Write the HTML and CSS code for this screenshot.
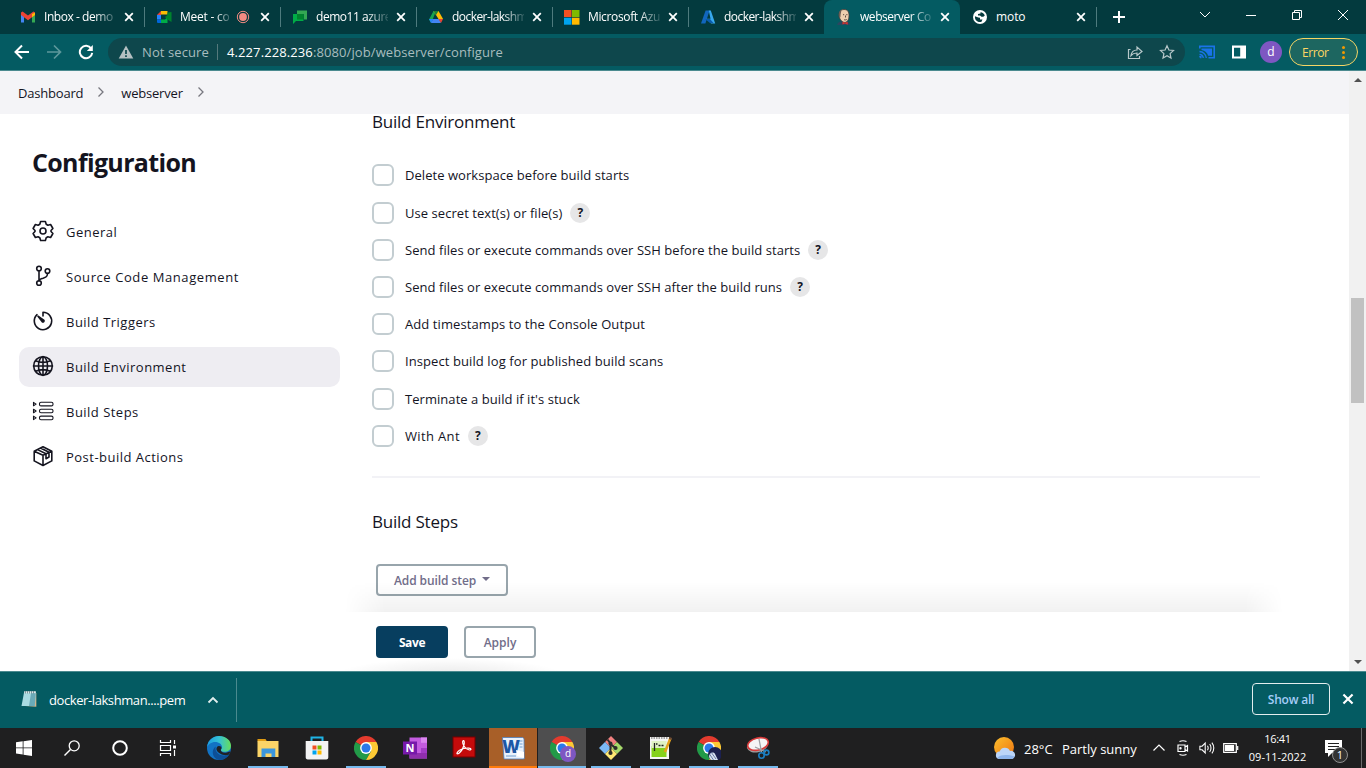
FILE: index.html
```html
<!DOCTYPE html>
<html lang="en">
<head>
<meta charset="utf-8">
<title>webserver Config [Jenkins]</title>
<link rel="stylesheet" href="styles.css">
</head>
<body>
<svg class="defs" aria-hidden="true">
  <symbol id="x" viewBox="0 0 10 10"><path d="M1.2 1.2l7.6 7.6M8.8 1.2L1.2 8.8" fill="none" stroke="currentColor" stroke-width="1.8"/></symbol>
  <symbol id="chrome" viewBox="0 0 24 24">
    <path d="M12 12L1.6 6A12 12 0 0 1 22.4 6z" fill="#e33b2e"/>
    <path d="M12 12L1.6 6A12 12 0 0 0 12 24L17.2 15z" fill="#229a48"/>
    <path d="M12 12L12 6H22.4A12 12 0 0 1 12 24L17.2 15z" fill="#fcc934"/>
    <circle cx="12" cy="12" r="5.9" fill="#fff"/><circle cx="12" cy="12" r="4.5" fill="#2a78ea"/>
  </symbol>
</svg>

<header class="tabs">
  <div class="tab">
    <svg class="fav" viewBox="0 0 16 16"><path d="M1 4v9.5h3V7z" fill="#4285f4"/><path d="M15 4v9.5h-3V7z" fill="#34a853"/><path d="M1 3.5L2.6 2.4 8 6.6l5.4-4.2L15 3.5V6l-7 5.2L1 6z" fill="#ea4335"/><path d="M12 5l3-1.500V6l-3 2.200z" fill="#fbbc04"/></svg>
    <span class="ttl t-a">Inbox - demo</span><svg class="cls"><use href="#x"/></svg>
  </div>
  <div class="tab">
    <svg class="fav" viewBox="0 0 16 16"><path d="M1 6l4-4v4z" fill="#ea4335"/><path d="M5 2h6.500v3.500H5z" fill="#fbbc04"/><path d="M1 6h4v4.500H1z" fill="#2684fc"/><path d="M1 10.500h4V14H2a1 1 0 0 1-1-1z" fill="#0066da"/><path d="M5 10.500h4L11.500 8v6H5z" fill="#00ac47"/><path d="M9 8l2.500-2V3.500L15.500 3v10l-4-2.500z" fill="#00832d"/></svg>
    <span class="ttl short t-b">Meet - co</span>
    <svg class="rec" viewBox="0 0 14 14"><circle cx="7" cy="7" r="5.700" fill="none" stroke="#f28b82" stroke-width="1"/><circle cx="7" cy="7" r="3.900" fill="#f28b82"/></svg><svg class="cls"><use href="#x"/></svg>
  </div>
  <div class="tab">
    <svg class="fav" viewBox="0 0 16 16"><path d="M5 1.500h10v9h-3V5H5z" fill="#34a853"/><path d="M1 5h10.500v7H4l-3 3z" fill="#00ac47"/><path d="M5 5h6.500v5.500H5z" fill="#00832d"/></svg>
    <span class="ttl t-c">demo11 azure</span><svg class="cls"><use href="#x"/></svg>
  </div>
  <div class="tab">
    <svg class="fav" viewBox="0 0 16 16"><path d="M5.500 2H8L3.300 14 1 10.500z" fill="#16a34f"/><path d="M5.500 2h5l4.600 8H10.500z" fill="#fbbc04"/><path d="M5.500 2h5L8 6z" fill="#188038"/><path d="M5 10h6l2 4H3z" fill="#4285f4"/><path d="M10.500 10H15l-2 4z" fill="#ea4335"/><path d="M1 10h4.500L3 14z" fill="#2684fc"/></svg>
    <span class="ttl t-d">docker-lakshm</span><svg class="cls"><use href="#x"/></svg>
  </div>
  <div class="tab">
    <svg class="fav" viewBox="0 0 16 16"><path d="M0 1h7.500v7H0z" fill="#f25022"/><path d="M8 1h7.500v7H8z" fill="#7fba00"/><path d="M0 8.700h7.500v7H0z" fill="#00a4ef"/><path d="M8 8.700h7.500v7H8z" fill="#ffb900"/></svg>
    <span class="ttl t-e">Microsoft Azu</span><svg class="cls"><use href="#x"/></svg>
  </div>
  <div class="tab last">
    <svg class="fav" viewBox="0 0 16 16"><path d="M5.600 1.500h4L5.400 14.500H1z" fill="#1266bd"/><path d="M8.800 1.500h2L15.200 14.500h-4.200L6.500 9.800h4z" fill="#38a8ee"/><path d="M5 10h5l3.500 4H10z" fill="#0a5cad"/></svg>
    <span class="ttl t-d">docker-lakshm</span><svg class="cls"><use href="#x"/></svg>
  </div>
  <div class="tab active">
    <svg class="fav" viewBox="0 0 16 16"><path d="M1.200 16c.2-2.400 2-3.400 4-3.600l6 .2c1.800.3 2.600 1.700 2.800 3.400z" fill="#2c4660"/><path d="M3 6C3 2.500 4.600.5 8 .5s5.200 2 5 6.300c0 3.800-1.800 6.600-4.300 6.600S3 10 3 6z" fill="#efcfae" stroke="#4a3a35" stroke-width=".8"/><path d="M2.900 7.500C2.300 4 3.500 1.800 5.500 1L4.600 5.500l-.2 3z" fill="#6d5d54"/><path d="M6.500 12.700l2.500 1 2.700-1v3L9 14.600l-2.500 1z" fill="#d8332d"/><path d="M7 5.700h1.200m2 0h1.300M9.500 6.500v2M8 10.600c1 .5 2 .4 2.800-.2" stroke="#3a2c28" stroke-width=".8" fill="none"/></svg>
    <span class="ttl t-f">webserver Co</span><svg class="cls"><use href="#x"/></svg>
  </div>
  <div class="tab">
    <svg class="fav" viewBox="0 0 16 16"><circle cx="8" cy="8" r="7" fill="#fff"/><path d="M8.500 3.300c2 .1 3.700 1.400 4.300 3.200l-1.500 1.300H9.500L8 6.500h-2V5l2.500-.4zM3 7.200l3.300 1.400 1.700.2v1.600l2.500.2-1.200 2.300A5 5 0 0 1 3 7.200z" fill="#053a3d"/></svg>
    <span class="ttl t-g">moto</span><svg class="cls"><use href="#x"/></svg>
  </div>
  <svg class="plus" viewBox="0 0 12 12"><path d="M6 0v12M0 6h12" stroke="#fff" stroke-width="2"/></svg>
  <div class="wincontrols">
    <svg viewBox="0 0 14 14"><path d="M2 4l5 5 5-5" /></svg>
    <svg viewBox="0 0 14 14"><path d="M2 7.500h10"/></svg>
    <svg viewBox="0 0 14 14"><path d="M2.500 4.500h7v7h-7zM4.500 4.500v-2h7v7h-2"/></svg>
    <svg viewBox="0 0 14 14"><path d="M2 2l10 10M12 2L2 12"/></svg>
  </div>
</header>

<nav class="toolbar">
  <div class="navbtns">
    <svg viewBox="0 0 16 16"><path d="M15 8H2M8 1.500L1.500 8 8 14.500" stroke="#fff" stroke-width="2" fill="none"/></svg>
    <svg viewBox="0 0 16 16"><path d="M1 8h13M8 1.500L14.500 8 8 14.500" stroke="#5e989c" stroke-width="1.700" fill="none"/></svg>
    <svg viewBox="0 0 16 16"><path d="M13.200 4.600A6.200 6.200 0 1 0 14.200 8.800" stroke="#fff" stroke-width="2" fill="none"/><path d="M14.800 1v6H8.800z" fill="#fff"/></svg>
  </div>
  <div class="omnibox">
    <svg class="warn" viewBox="0 0 16 14"><path d="M8 .5L15.300 13.500H.7z" fill="#b4c0c2"/><path d="M8 5v4M8 10.200v1.800" stroke="#0e474c" stroke-width="1.700"/></svg>
    <span class="t nots">Not secure</span><i class="vsep"></i>
    <span class="t url"><b>4.227.228.236</b>:8080/job/webserver/configure</span>
    <svg class="ob share" viewBox="0 0 16 16"><path d="M3.500 5.500h-2v9h11v-2.500M4 11.500c.5-3.500 2.500-5.500 6-5.500V3l5 4.500-5 4V9c-3 0-4.500.7-6 2.500z"/></svg>
    <svg class="ob" viewBox="0 0 16 16"><path d="M8 1.800l1.900 4.200 4.600.5-3.400 3.100.9 4.500-4-2.300-4 2.300.9-4.500L1.500 6.500 6.100 6z"/></svg>
  </div>
  <svg class="ext" viewBox="0 0 16 16"><path d="M.8 4.500V2.400h14.400v11.400H9.500" fill="none" stroke="#1a73e8" stroke-width="1.600"/><path d="M2.500 4.500H13v7.300H9.200C8.500 8.700 6 6.700 2.500 6z" fill="#1a73e8"/><path d="M.5 7.500A7 7 0 0 1 7.300 14M.5 10.500A4 4 0 0 1 4.300 14M.3 12.800h1.500v1.400" fill="none" stroke="#1a73e8" stroke-width="1.400"/></svg>
  <svg class="ext" viewBox="0 0 16 16"><path d="M1 1.500h14v13H1zM3 3.700v8.700h6.200V3.700z" fill="#fff" fill-rule="evenodd"/></svg>
  <span class="avatar">d</span>
  <span class="error"><span class="t">Error</span><i class="dots"></i></span>
</nav>

<main class="page">
  <div class="crumbs">
    <span class="t c1">Dashboard</span><svg viewBox="0 0 8 12"><path d="M1.500 1.500L6 6l-4.500 4.500"/></svg>
    <span class="t c2">webserver</span><svg viewBox="0 0 8 12"><path d="M1.500 1.500L6 6l-4.500 4.500"/></svg>
  </div>
  <div class="cols">
    <aside class="side">
      <h1>Configuration</h1>
      <a class="item"><svg viewBox="0 0 22 22"><path d="M8.600 1.500h4.800l.8 2.700 1.700 1 2.700-.7 2.300 4-1.900 2v1l1.900 2-2.300 4-2.700-.7-1.700 1-.8 2.700H8.600l-.8-2.700-1.700-1-2.700.7-2.300-4L3 11.500v-1l-1.900-2 2.300-4 2.700.7 1.700-1z"/><circle cx="11" cy="11" r="3"/></svg><span class="t">General</span></a>
      <a class="item scm"><svg viewBox="0 0 22 22"><circle cx="7" cy="3.500" r="2.300"/><circle cx="7" cy="18" r="2.300"/><circle cx="15.500" cy="6" r="2.300"/><path d="M7 6v9.700M15.500 8.500c0 3.500-2 4-4.500 4.700-2 .5-3.500 1-4 2.500"/></svg><span class="t">Source Code Management</span></a>
      <a class="item"><svg viewBox="0 0 22 22"><path d="M11 6V2.300A8.700 8.700 0 1 1 5 4.700"/><path d="M6 6.200l6 4.300a1.200 1.200 0 0 1-1.500 1.500z" fill="#14141f"/></svg><span class="t">Build Triggers</span></a>
      <a class="item on"><svg viewBox="0 0 22 22"><circle cx="11" cy="11" r="9.300"/><ellipse cx="11" cy="11" rx="4.500" ry="9.300"/><path d="M11 1.500v19M1.500 11h19M3.500 5.800c4.500 1.900 10.500 1.900 15 0M3.500 16.200c4.500-1.900 10.500-1.900 15 0"/></svg><span class="t">Build Environment</span></a>
      <a class="item thin"><svg viewBox="0 0 22 22"><rect x="7.500" y="2.300" width="13.500" height="3.600" rx="1.500"/><rect x="7.500" y="9.200" width="13.500" height="3.600" rx="1.500"/><rect x="7.500" y="16.100" width="13.500" height="3.600" rx="1.500"/><path d="M1.500 2.400v3.400l2.600-1.700zM1.500 9.300v3.400l2.600-1.700zM1.500 16.200v3.400l2.600-1.700z"/></svg><span class="t">Build Steps</span></a>
      <a class="item"><svg viewBox="0 0 22 22"><path d="M2.200 6.300L11 1.700l8.800 4.600v9.600L11 20.500l-8.800-4.600zM2.200 6.300l8.800 4 8.800-4M11 10.300v10M5.500 4.600l8.500 4.200v5l3-1.800V7.300L8.500 3"/></svg><span class="t">Post-build Actions</span></a>
    </aside>
    <section class="main">
      <h2>Build Environment</h2>
      <div class="checks">
        <label class="row"><i class="box"></i><span class="t">Delete workspace before build starts</span></label>
        <label class="row"><i class="box"></i><span class="t">Use secret text(s) or file(s)</span><b class="q">?</b></label>
        <label class="row"><i class="box"></i><span class="t">Send files or execute commands over SSH before the build starts</span><b class="q">?</b></label>
        <label class="row"><i class="box"></i><span class="t">Send files or execute commands over SSH after the build runs</span><b class="q">?</b></label>
        <label class="row wide"><i class="box"></i><span class="t">Add timestamps to the Console Output</span></label>
        <label class="row wide"><i class="box"></i><span class="t">Inspect build log for published build scans</span></label>
        <label class="row"><i class="box"></i><span class="t">Terminate a build if it's stuck</span></label>
        <label class="row ant"><i class="box"></i><span class="t">With Ant</span><b class="q">?</b></label>
      </div>
      <hr>
      <h2 class="steps">Build Steps</h2>
      <button class="btn add"><span class="t">Add build step</span><i class="caret"></i></button>
      <div class="fade"></div>
      <div class="actions"><button class="btn save"><span class="t">Save</span></button><button class="btn apply"><span class="t">Apply</span></button></div>
    </section>
    <div class="scroll"><i class="up"></i><i class="thumb"></i><i class="down"></i></div>
  </div>
</main>

<footer class="downloads">
  <svg class="file" viewBox="0 0 18 18"><path d="M4 3h12.300v13.800L5 16z" fill="#d5b48a"/><path d="M4 2.500h11.800L14.800 16H1.500z" fill="#a9dbe2"/><path d="M11 3h4.800l-1 13H9z" fill="#6aaab8"/><path d="M4.200 1.200h11.600v2H4.200z" fill="#dfe8ea"/><path d="M5.500 1v2.500m2-2.500v2.500m2-2.500v2.500m2-2.500v2.500m2-2.500v2.500" stroke="#55777d" stroke-width=".7"/></svg>
  <span class="t fn">docker-lakshman....pem</span>
  <svg class="chev" viewBox="0 0 12 8"><path d="M1.500 6.500L6 2l4.500 4.500" fill="none" stroke="#e2eeee" stroke-width="1.800"/></svg>
  <i class="dsep"></i>
  <span class="showall"><span class="t">Show all</span></span>
  <svg class="dx"><use href="#x"/></svg>
</footer>

<footer class="taskbar">
  <div class="sys"><svg width="16" height="16" viewBox="0 0 16 16"><path d="M0 2.300l6.700-1V7.500H0zM7.500 1.200L16 0v7.500H7.500zM0 8.300h6.700v6.200L0 13.600zM7.500 8.300H16V16l-8.500-1.300z" fill="#fff"/></svg></div>
  <div class="sys"><svg width="18" height="18" viewBox="0 0 18 18"><circle cx="11.200" cy="6.800" r="5" fill="none" stroke="#fff" stroke-width="1.300"/><path d="M7.500 10.500L1.500 16.500" stroke="#fff" stroke-width="1.400"/></svg></div>
  <div class="sys"><svg width="18" height="18" viewBox="0 0 18 18"><circle cx="9" cy="9" r="6.800" fill="none" stroke="#fff" stroke-width="2"/></svg></div>
  <div class="sys"><svg width="18" height="18" viewBox="0 0 18 18"><path d="M1.500 1v2.500h10V1M1.500 17v-2.500h10V17M1.500 6.500h10v5h-10zM15.500 1v4M15.500 11v6" fill="none" stroke="#fff" stroke-width="1.200"/><path d="M14 6.500h3v3h-3z" fill="#fff"/></svg></div>
  <div class="apps">
    <div class="app"><svg viewBox="0 0 24 24"><defs><linearGradient id="e1" x1="0" x2="1"><stop offset="0" stop-color="#1b9de2"/><stop offset=".5" stop-color="#35c1d5"/><stop offset="1" stop-color="#66de5a"/></linearGradient></defs><circle cx="12" cy="12" r="12" fill="#1273c4"/><path d="M0 11C1 4 6 0 12 0c7 0 12 4.500 12 9.800 0 4-3 6-6.400 6-2.200 0-3.800-.8-3.800-1.800 0-.8 1.300-1.200 1.300-3C15 8.500 12 6 8.200 6 4 6 1.500 8.500 0 11z" fill="url(#e1)"/><path d="M8.800 10.500c-1.500 4 2 9 8 9 2 0 4-.6 5.600-1.600A12 12 0 0 1 12 24c-5-1-7-6-6-9.500.5-1.900 1.500-3.200 2.800-4z" fill="#0d4f96"/><path d="M13.800 14c0 2 3 3.500 6 2.500 1-.3 2-.7 2.500-1l1 .5-1.200 2.500c-5 2-11-1-12.500-4.500-.6-2 .6-4 2.400-4 1.500 0 2.500.8 2.500 2 0 1-.7 1.500-.7 2z" fill="#202225"/></svg></div>
    <div class="app run"><svg viewBox="0 0 24 24"><path d="M1.500 3h8l1.500 2.500H1.500z" fill="#e09b13"/><path d="M1.500 5h21v16h-21z" fill="#fbd467"/><path d="M5.500 12.500h13.800V21h-3.800v-3.500h-6V21H5.500z" fill="#3b96dd"/></svg></div>
    <div class="app"><svg viewBox="0 0 24 24"><path d="M6.500 6V1.500h11V6" fill="none" stroke="#1fb4e5" stroke-width="2"/><path d="M.7 5h22.600v16.500c0 1-1 2-2 2H2.700c-1 0-2-1-2-2z" fill="#f3f3f3"/><path d="M7.500 9.500h4v4h-4z" fill="#f25022"/><path d="M12.500 9.500h4v4h-4z" fill="#7fba00"/><path d="M7.500 14.500h4v4h-4z" fill="#00a4ef"/><path d="M12.500 14.500h4v4h-4z" fill="#ffb900"/></svg></div>
    <div class="app run"><svg><use href="#chrome"/></svg></div>
    <div class="app"><svg viewBox="0 0 24 24"><path d="M6.500 1.500H24v21H6.500z" fill="#c35be0"/><path d="M18 1.500h6v5.300h-6z" fill="#da86f0"/><path d="M18 12h6v5h-6z" fill="#a13bc5"/><path d="M6.500 17h17.500v5.500H6.500z" fill="#8f2ead"/><path d="M0 5.500h14v13H0z" fill="#7719aa"/><text x="7" y="16" class="onletter">N</text></svg></div>
    <div class="app acro"><svg viewBox="0 0 24 24"><rect x="1" y="1" width="22" height="20" fill="#c40b0b" stroke="#700" /><path d="M5 17c1-2 4-4 7-4.500 3.500-.6 7-.5 7 .8 0 1.500-4 .4-6-2-2-2.200-3-5.500-2-6.500 1-.9 1.700 1 1 4C11.300 12 8.500 16 7 17.200c-1.500 1-2.300.6-2-.2z" fill="none" stroke="#fff" stroke-width="1.200"/></svg></div>
    <div class="app word"><svg viewBox="0 0 24 24"><path d="M1.500 1.500h20l1.500 1 .2 20.500H3z" fill="#e9f1fb" stroke="#4d7fbd" stroke-width=".8"/><path d="M18 5h3.500M18.500 8h3M18.500 11h3M5 20h10" stroke="#6f9ed1"/><text x="10" y="16.500" class="wletter">W</text><path d="M15 14l8 2v6l-7-2z" fill="#fff"/></svg></div>
    <div class="app cur"><svg><use href="#chrome"/></svg><em class="badge">d</em></div>
    <div class="app run"><svg viewBox="0 0 24 24"><path d="M12 0l6 6-6 6-6-6z" fill="#f08080"/><path d="M6 6l6 6-6 6-6-6z" fill="#7ab8f5"/><path d="M18 6l6 6-6 6-6-6z" fill="#a5d86a"/><path d="M12 12l6 6-6 6-6-6z" fill="#ffe873"/><path d="M8.500 3.500l3 4V17M11.500 8l5 4" stroke="#2b2b2b" stroke-width="2" fill="none"/><circle cx="11.500" cy="17" r="2.100" fill="#2b2b2b"/><circle cx="16.500" cy="12" r="2.100" fill="#2b2b2b"/><circle cx="11.500" cy="7.500" r="2" fill="#2b2b2b"/></svg></div>
    <div class="app run"><svg viewBox="0 0 24 24"><path d="M2 1h19v22H2z" fill="#f5f5f5"/><path d="M3.500 10h15v11h-15z" fill="#85d11c"/><path d="M3.500 5h15v7h-15z" fill="#e0f2c4"/><path d="M3 2h17" stroke="#8a8a8a" stroke-width="1.500" stroke-dasharray="1.500 1"/><path d="M6.500 7v8M8 8h1.500M10.500 9.500h2M13.500 9.500h2" stroke="#222" stroke-width="1.300"/><path d="M22.500 2L17 16" stroke="#e5a21c" stroke-width="2.600"/><path d="M21.500 1l2.500 1-.8 2-2.400-1z" fill="#6b4a36"/></svg></div>
    <div class="app run"><svg viewBox="0 0 24 24"><use href="#chrome" width="24" height="24"/><circle cx="18" cy="18" r="7" fill="#1c2150"/><path d="M12 20c1-4 5-4.500 6-2l3 6c-4 2-9 0-9-4z" fill="#d8e2f2"/><path d="M14 16l5 7M12.500 18l4 6" stroke="#4f6290" stroke-width=".8"/></svg></div>
    <div class="app run"><svg viewBox="0 0 24 24"><ellipse cx="11.500" cy="9.500" rx="10.800" ry="6.700" fill="#9b9b9b" transform="rotate(-14 11.500 9.500)"/><ellipse cx="12" cy="8" rx="10.500" ry="6" fill="#f5f5f5" stroke="#d83a3a" stroke-width="1.600" transform="rotate(-14 12 8)"/><path d="M13 3l2.500 13M9 11l11 5" stroke="#9c9fa3" stroke-width="1.300"/><circle cx="15.500" cy="19.500" r="2.700" fill="none" stroke="#1b7fc4" stroke-width="1.600"/><circle cx="20.500" cy="16.500" r="2.400" fill="none" stroke="#1b7fc4" stroke-width="1.600"/></svg></div>
  </div>
  <div class="tray">
    <svg class="wx" viewBox="0 0 22 22"><defs><linearGradient id="s1" x1="0" x2="1" y2="1"><stop offset="0" stop-color="#fcbf2d"/><stop offset="1" stop-color="#ee7411"/></linearGradient></defs><circle cx="10" cy="10" r="10" fill="url(#s1)"/><path d="M5.500 22a3.700 3.700 0 0 1 .2-7.400A5.500 5.500 0 0 1 16 14a4 4 0 0 1 2 8z" fill="#bcd5f8"/><path d="M5.500 22a3.700 3.700 0 0 1-2-1.500c4-3 10-3 17-1a4 4 0 0 1-2.500 2.500z" fill="#8eb5ec"/></svg>
    <span class="t wxt w1">28°C</span><span class="t wxt w2">Partly sunny</span>
    <svg class="tr" viewBox="0 0 16 16"><path d="M2.500 10.500L8 5l5.500 5.500" /></svg>
    <svg class="tr" viewBox="0 0 16 16"><path d="M3 5h7v6.500H3zM10 7l2.500-1.500v5.500L10 9.500M4.500 1.500c2.300-1 4.700-1 7 0M4.500 14.500c2.300 1 4.700 1 7 0"/><circle cx="5.500" cy="8.200" r=".6"/></svg>
    <svg class="tr" viewBox="0 0 18 16"><path d="M1 6h2.500L7 2.500v11L3.500 10H1zM9.500 5.500c1 1.500 1 3.500 0 5M12 3.500c2 2.500 2 6.500 0 9M14.500 2c2.500 3.500 2.500 8.500 0 12"/></svg>
    <svg class="tr" viewBox="0 0 16 16"><path d="M.7 3.700h12.600v8.600H.7zM14.700 6v4"/><path d="M2.500 5.500h8v5h-8z" fill="#fff"/></svg>
    <div class="clock"><span class="t time">16:41</span><span class="t date">09-11-2022</span></div>
    <div class="notif"><svg viewBox="0 0 18 18"><path d="M0 0h17v13H7l-4 4v-4H0z" fill="#fff"/><path d="M3 3.500h11M3 6.500h11M3 9.500h11" stroke="#222"/></svg><em>1</em></div>
  </div>
</footer>
</body>
</html>
```

FILE: styles.css
```css
* { box-sizing: border-box; }
body {
  margin: 0; width: 1366px; height: 768px; overflow: hidden;
  display: flex; flex-direction: column;
  font-family: "Open Sans", "Noto Sans", sans-serif; font-size: 13px; color: #14141f;
}
svg { display: block; flex: none; }
i, em { font-style: normal; display: block; flex: none; }
.t { white-space: nowrap; }
.defs { position: absolute; width: 0; height: 0; }

.tabs { height: 34px; flex: none; background: #033a3e; display: flex; align-items: center; padding-left: 8px; }
.tab { position: relative; width: 136px; height: 34px; display: flex; align-items: center; padding-left: 12px; color: #e9f3f3; flex: none; }
.tab::after { content: ""; position: absolute; right: -1px; top: 7px; width: 1px; height: 20px; background: #4e7b7e; }
.tab.last::after, .tab.active::after { display: none; }
.tab.active { background: #045b62; border-radius: 8px 8px 0 0; }
.fav { width: 16px; height: 16px; }
.ttl { width: 72px; margin-left: 8px; white-space: nowrap; font-size: 12px; line-height: 18px; color: #fff;
  -webkit-mask-image: linear-gradient(90deg, #000 70%, rgba(0,0,0,.15)); mask-image: linear-gradient(90deg, #000 70%, rgba(0,0,0,.15)); }
.ttl.short { width: 51px; }
.t-a { letter-spacing: -.45px; }
.t-b { letter-spacing: -.25px; }
.t-c { letter-spacing: -.45px; }
.t-d { letter-spacing: -.55px; }
.t-e { letter-spacing: -.35px; }
.t-f { letter-spacing: -.45px; }
.t-g { letter-spacing: -.1px; -webkit-mask-image: none; mask-image: none; }
.rec { width: 14px; height: 14px; margin-left: 5px; margin-right: 2px; }
.cls { width: 10px; height: 10px; margin-left: 8px; color: #fff; }
.plus { width: 12px; height: 12px; margin-left: 17px; }
.wincontrols { margin-left: auto; display: flex; gap: 32px; padding-right: 16px; margin-top: -5px; }
.wincontrols svg { width: 14px; height: 14px; fill: none; stroke: #fff; }

.toolbar { height: 37px; flex: none; background: #045b62; border-bottom: 1px solid #4b8a8f; display: flex; align-items: center; padding-left: 14px; }
.navbtns { display: flex; gap: 16px; }
.navbtns svg { width: 16px; height: 16px; }
.omnibox { margin-left: 14px; width: 1077px; height: 28px; border-radius: 14px; background: #0e474c; display: flex; align-items: center; padding-left: 10px; font-size: 13px; color: #a8bdbf; }
.warn { width: 16px; height: 14px; }
.nots { margin-left: 8px; width: 68px; letter-spacing: .1px; }
.vsep { width: 1px; height: 16px; background: #55797c; margin: 0 9px 0 7px; }
.url { letter-spacing: .1px; }
.url b { font-weight: 400; color: #fff; }
.ob { width: 16px; height: 16px; fill: none; stroke: #b7c8ca; stroke-width: 1.200; margin-right: 10px; }
.share { margin-left: auto; margin-right: 16px; }
.ext { width: 16px; height: 16px; margin-left: 14px; }
.ext + .ext { margin-left: 16px; }
.avatar { width: 22px; height: 22px; border-radius: 50%; background: #7e57c2; color: #fff; text-align: center; font-size: 12px; line-height: 21px; margin-left: 13px; }
.error { width: 69px; height: 28px; margin-left: 7px; border: 1px solid #f5d565; border-radius: 14px; background: #1d6660; color: #fdd663; font-size: 12px; letter-spacing: -.4px; display: flex; align-items: center; padding-left: 12px; }
.dots { width: 3px; height: 3px; border-radius: 50%; background: #f29900; box-shadow: 0 -5px #f29900, 0 5px #f29900; margin: 0 12px 0 auto; }

.page { height: 600px; flex: none; position: relative; background: #fff; }
.crumbs { position: absolute; left: 0; top: 0; z-index: 2; width: 1349px; height: 43px; background: #f4f4f7; display: flex; align-items: center; padding: 1px 0 0 18px; font-size: 13px; letter-spacing: -.2px; }
.crumbs svg { width: 8px; height: 12px; fill: none; stroke: #77777f; stroke-width: 1.300; margin: -3px 16px 0 14px; }
.cols { display: flex; height: 600px; }
.side { width: 345px; padding: 74px 0 0 19px; }
h1 { margin: 0 0 33px 13px; font-size: 25px; line-height: 34px; font-weight: 700; letter-spacing: -.65px; }
.side h1 { height: 34px; }
.item { display: flex; align-items: center; height: 40px; width: 321px; border-radius: 10px; margin-bottom: 5px; padding-left: 13px; font-size: 13px; font-weight: 500; letter-spacing: .48px; }
.item.scm { letter-spacing: .58px; }
.item svg { width: 22px; height: 22px; margin: -2px 12px 0 0; fill: none; stroke: #14141f; stroke-width: 1.600; stroke-linejoin: round; stroke-linecap: round; }
.item.thin svg { stroke-width: 1.100; }
.item.on { background: #eeedf2; }
.main { position: relative; width: 1004px; height: 600px; padding: 38px 0 0 27px; overflow: hidden; }
h2 { margin: 0; font-size: 17px; line-height: 26px; font-weight: 400; letter-spacing: -.22px; }
.checks { padding-top: 21.700px; }
.row { display: flex; align-items: center; height: 37.230px; font-size: 13px; letter-spacing: .05px; }
.row.wide { letter-spacing: .09px; }
.row.ant { letter-spacing: .35px; }
.box { width: 22px; height: 22px; border: 2px solid #c3cdd1; border-radius: 6px; margin-right: 11px; background: #fff; }
.q { width: 20px; height: 20px; border-radius: 50%; background: #e6e6e7; font-size: 12px; line-height: 20px; text-align: center; margin-left: 8px; letter-spacing: 0; }
hr { margin: 21.300px 89px 0 0; border: 0; height: 2px; background: #f2f2f6; }
.steps { margin-top: 31px; }
.btn { font-family: inherit; font-weight: 600; font-size: 12px; height: 32px; border-radius: 4px; border: 2px solid #98a5ac; background: transparent; color: #716d89; display: flex; align-items: center; justify-content: center; padding: 0; }
.add { margin: 29px 0 0 4px; width: 132px; gap: 6px; letter-spacing: -.08px; padding-top: 1px; }
.caret { border: 4px solid transparent; border-top-color: #716d89; border-bottom: 0; margin-top: -3px; }
.fade { position: absolute; left: 0; top: 511px; width: 938px; height: 30px; background: linear-gradient(rgba(0,0,0,0), rgba(0,0,0,.055)); -webkit-mask-image: linear-gradient(90deg, transparent, #000 40px, #000 900px, transparent); mask-image: linear-gradient(90deg, transparent, #000 40px, #000 900px, transparent); }
.actions { position: absolute; left: 0; top: 541px; width: 938px; height: 59px; padding: 14px 0 0 31px; display: flex; gap: 16px; background: radial-gradient(ellipse 115px 18px at 105px 64px, rgba(0,0,0,.09), transparent) #fff; }
.save { width: 72px; background: #073e5f; border-color: #073e5f; color: #fff; font-weight: 700; letter-spacing: -.4px; padding-top: 1px; }
.apply { width: 72px; background: #fff; padding-top: 1px; }
.scroll { width: 17px; height: 600px; background: #f1f1f1; display: flex; flex-direction: column; align-items: center; }
.up { border: 4px solid transparent; border-bottom-color: #505050; border-top: 0; margin-top: 7px; }
.thumb { width: 13px; height: 105px; background: #c1c1c1; margin-top: 216px; }
.down { border: 4px solid transparent; border-top-color: #505050; border-bottom: 0; margin-top: auto; margin-bottom: 7px; }

.downloads { height: 57px; flex: none; background: #045b62; border-top: 1px solid #4b8a8f; display: flex; align-items: center; padding-left: 20px; color: #fff; }
.file { width: 18px; height: 18px; margin-top: -2px; }
.fn { margin-left: 11px; width: 136px; font-size: 13px; letter-spacing: -.41px; }
.chev { width: 12px; height: 8px; margin-left: 22px; }
.dsep { width: 1px; height: 44px; background: #4b8a8f; margin-left: 17px; }
.showall { margin-left: auto; width: 78px; height: 32px; border: 1px solid #e3eeee; border-radius: 4px; color: #a5cdf8; font-size: 12px; font-weight: 600; letter-spacing: -.2px; display: flex; align-items: center; justify-content: center; margin-top: -2px; }
.dx { width: 12px; height: 12px; margin: -2px 12px 0; }

.taskbar { height: 40px; flex: none; background: #1f1f20; display: flex; color: #fff; }
.sys { width: 48px; display: flex; align-items: center; justify-content: center; }
.apps { display: flex; gap: 1px; margin-left: 3px; }
.app { position: relative; width: 48px; height: 40px; display: flex; align-items: center; justify-content: center; }
.app svg { width: 24px; height: 24px; }
.app.run::after, .app.word::after, .app.cur::after { content: ""; position: absolute; left: 4px; right: 4px; bottom: 0; height: 2px; background: #76b9ed; }
.app.word { background: #a85f28; }
.app.word::after { left: 0; right: 0; background: #ff7b0a; }
.app.cur { background: #4e4e4f; }
.app.cur::after { left: 0; right: 0; }
.onletter, .wletter { font: 700 11px "Open Sans", sans-serif; fill: #fff; text-anchor: middle; }
.wletter { font-size: 17px; font-weight: 800; fill: #1c57a5; }
.badge { position: absolute; left: 22px; top: 18px; width: 16px; height: 16px; border-radius: 50%; background: #7e57c2; font-size: 10px; line-height: 15px; text-align: center; }
.tray { margin-left: auto; display: flex; align-items: center; padding-right: 4px; }
.wx { width: 22px; height: 22px; }
.wxt { font-size: 13px; padding-top: 1px; }
.w1 { width: 29px; margin-left: 8px; }
.w2 { width: 75px; margin-left: 9px; }
.tr { width: 16px; height: 16px; fill: none; stroke: #fff; stroke-width: 1.200; margin-left: 8px; }
.w2 + .tr { margin-left: 14px; }
.clock { width: 77px; display: flex; flex-direction: column; align-items: center; font-size: 11px; line-height: 18px; }
.time { letter-spacing: -.3px; }
.notif { position: relative; width: 46px; height: 40px; padding: 12px 0 0 9px; border-right: 1px solid #6a6a6b; }
.notif svg { width: 18px; height: 18px; }
.notif em { position: absolute; left: 16px; top: 19px; width: 16px; height: 16px; border-radius: 50%; border: 1px solid #909090; background: #333; font-size: 11px; line-height: 14px; text-align: center; }
```
